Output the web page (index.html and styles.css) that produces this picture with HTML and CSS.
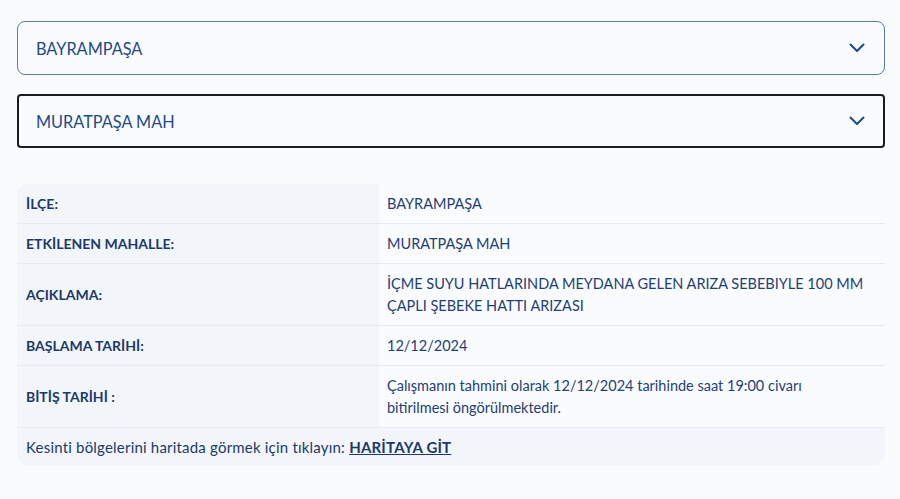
FILE: index.html
```html
<!DOCTYPE html>
<html lang="tr">

<head>
  <meta charset="UTF-8">
  <meta name="viewport" content="width=device-width, initial-scale=1.0">
  <title>Su Kesintileri</title>
  <link rel="stylesheet" href="styles.css">
</head>

<body>
  <div class="page">
    <div class="select select-district">
      <span>BAYRAMPAŞA</span>
      <svg class="chevron" width="16" height="10" viewBox="0 0 16 10">
        <path d="M1.5 1.5 L8 8 L14.5 1.5" fill="none" stroke="#1d4a8c" stroke-width="2" stroke-linecap="round" stroke-linejoin="round" />
      </svg>
    </div>
    <div class="select select-hood">
      <span>MURATPAŞA MAH</span>
      <svg class="chevron" width="16" height="10" viewBox="0 0 16 10">
        <path d="M1.5 1.5 L8 8 L14.5 1.5" fill="none" stroke="#1d4a8c" stroke-width="2" stroke-linecap="round" stroke-linejoin="round" />
      </svg>
    </div>

    <div class="info">
      <div class="row">
        <div class="label">İLÇE:</div>
        <div class="value">BAYRAMPAŞA</div>
      </div>
      <div class="row">
        <div class="label">ETKİLENEN MAHALLE:</div>
        <div class="value">MURATPAŞA MAH</div>
      </div>
      <div class="row">
        <div class="label">AÇIKLAMA:</div>
        <div class="value">İÇME SUYU HATLARINDA MEYDANA GELEN ARIZA SEBEBIYLE 100 MM ÇAPLI ŞEBEKE HATTI ARIZASI</div>
      </div>
      <div class="row">
        <div class="label">BAŞLAMA TARİHİ:</div>
        <div class="value">12/12/2024</div>
      </div>
      <div class="row">
        <div class="label">BİTİŞ TARİHİ :</div>
        <div class="value">Çalışmanın tahmini olarak 12/12/2024 tarihinde saat 19:00 civarı bitirilmesi öngörülmektedir.</div>
      </div>
      <div class="footer">
        Kesinti bölgelerini haritada görmek için tıklayın: <a href="#">HARİTAYA GİT</a>
      </div>
    </div>
  </div>
</body>

</html>
```

FILE: styles.css
```css
body {
  margin: 0;
  background-color: #f9fbfd;
  font-family: 'Lato', 'Noto Sans', sans-serif;
  color: #1b3b6e;
}

.page {
  padding: 21px 15px 0 17px;
}

.select {
  display: flex;
  align-items: center;
  justify-content: space-between;
  box-sizing: border-box;
  height: 54px;
  font-size: 16.3px;
  color: #1e4a8a;
  background-color: #f9fbfd;
}

.select-district {
  border: 1px solid #5a7cb0;
  border-radius: 8px;
  padding: 0 19px 0 18px;
}

.select-hood {
  margin-top: 19px;
  border: 2px solid #1c1c1c;
  border-radius: 4px;
  padding: 0 18px 0 17px;
}

.chevron {
  display: block;
}

.info {
  margin-top: 36px;
  border-radius: 12px;
  overflow: hidden;
  background-color: #f9fbfd;
  font-size: 14.5px;
}

.row {
  display: grid;
  grid-template-columns: 362px 1fr;
  border-bottom: 1px solid #e6e9ee;
}

.label,
.value {
  display: flex;
  align-items: center;
  padding: 9px 9px 8px;
  line-height: 22px;
}

.label {
  background-color: #f2f5fa;
  font-weight: 700;
  font-size: 14px;
  color: #1b3a6b;
}

.value {
  padding-left: 8px;
  padding-right: 18px;
  color: #1f4078;
}

.footer {
  background-color: #f2f5fa;
  padding: 8px 9px;
  line-height: 22px;
  font-size: 15px;
  letter-spacing: 0.2px;
  color: #1b3a6b;
}

.footer a {
  color: #1b3a6b;
  font-weight: 700;
}
```
